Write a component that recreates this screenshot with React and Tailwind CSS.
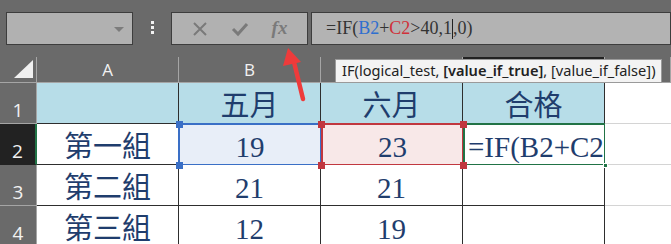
import React from "react";

const cellFont = { fontFamily: '"Liberation Serif", "Noto Sans CJK TC", serif' };

function Cell({ children, className = "" }) {
  return (
    <div
      className={`flex items-end justify-center pb-[2px] text-[29px] leading-none text-[#1f3d6d] border-r border-b border-[#2e2e2e] ${className}`}
      style={cellFont}
    >
      {children}
    </div>
  );
}

function RowHead({ n, active }) {
  return (
    <div
      className={`flex items-end justify-center pb-[3px] text-[19px] leading-none text-[#f2f2f2] border-b ${
        active ? "bg-[#222] border-[#222] border-r-2 border-r-[#217346]" : "bg-[#6a6a6a] border-[#a5a5a5] border-r border-r-[#a5a5a5]"
      }`}
      style={{ fontFamily: '"Open Sans", sans-serif' }}
    >
      {n}
    </div>
  );
}

function ColHead({ label, dark }) {
  return (
    <div
      className={`flex items-center justify-center text-[17px] text-[#f2f2f2] border-r border-[#a5a5a5] border-b ${
        dark ? "bg-[#222]" : "bg-[#6a6a6a]"
      }`}
      style={{ fontFamily: '"Open Sans", sans-serif' }}
    >
      {label}
    </div>
  );
}

function Handle({ x, y, color }) {
  return <div className={`absolute w-[7px] h-[7px] ${color}`} style={{ left: x - 3, top: y - 3 }} />;
}

export default function App() {
  return (
    <div className="relative w-[671px] h-[244px] overflow-hidden bg-[#6a6a6a] select-none">
      {/* toolbar */}
      <div className="h-[57px] flex items-start pt-[12px] pl-[6px]">
        <div className="relative w-[127px] h-[33px] bg-[#b1b1b1] border border-[#3d3d3d]">
          <div className="absolute right-[8px] top-[14px] w-0 h-0 border-l-[5px] border-r-[5px] border-t-[5px] border-l-transparent border-r-transparent border-t-[#7c7c7c]" />
        </div>
        <div className="w-[38px] flex flex-col items-center gap-[2px] pt-[9px]">
          <div className="w-[3px] h-[3px] bg-[#f2f2f2]" />
          <div className="w-[3px] h-[3px] bg-[#f2f2f2]" />
          <div className="w-[3px] h-[3px] bg-[#f2f2f2]" />
        </div>
        <div className="w-[137px] h-[33px] bg-[#b1b1b1] border border-[#3d3d3d] flex items-center justify-around px-[8px]">
          <svg width="16" height="16" viewBox="0 0 16 16">
            <path d="M2 2 L14 14 M14 2 L2 14" stroke="#7a7a7a" strokeWidth="2" />
          </svg>
          <svg width="18" height="16" viewBox="0 0 18 16">
            <path d="M2 8 L7 13 L16 3" stroke="#7a7a7a" strokeWidth="3" fill="none" />
          </svg>
          <span className="text-[19px] italic font-bold text-[#7a7a7a]" style={{ fontFamily: '"Liberation Serif", serif' }}>
            fx
          </span>
        </div>
        <div className="ml-[3px] flex-1 h-[33px] bg-[#b3b3b3] border border-[#3d3d3d] flex items-center pl-[14px] text-[18px] text-[#333]" style={{ fontFamily: '"Liberation Serif", serif' }}>
          <span>=IF(</span>
          <span className="text-[#2f6fcf]">B2</span>
          <span>+</span>
          <span className="text-[#d0303a]">C2</span>
          <span>&gt;40,1</span>
          <span className="inline-block w-[1px] h-[20px] bg-[#222]" />
          <span>,0)</span>
        </div>
      </div>

      {/* sheet */}
      <div className="grid grid-cols-[37px_142px_142px_142px_142px_66px] grid-rows-[26px_41px_41px_41px_41px]">
        <div className="relative border-r border-b border-[#a5a5a5] bg-[#6a6a6a]">
          <svg className="absolute right-[3px] bottom-[4px]" width="19" height="18" viewBox="0 0 19 18">
            <path d="M19 0 L19 18 L0 18 Z" fill="#f0f0f0" />
          </svg>
        </div>
        <ColHead label="A" />
        <ColHead label="B" />
        <ColHead label="" />
        <ColHead label="" dark />
        <ColHead label="" />

        <RowHead n="1" />
        <Cell className="bg-[#b7dde8]" />
        <Cell className="bg-[#b7dde8]">五月</Cell>
        <Cell className="bg-[#b7dde8]">六月</Cell>
        <Cell className="bg-[#b7dde8]">合格</Cell>
        <div className="bg-white border-b border-[#d4d4d4]" />

        <RowHead n="2" active />
        <Cell className="bg-white">第一組</Cell>
        <Cell className="bg-[#e8eef8] border-2 border-[#3a6fc6] -ml-[1px] -mt-[1px]">19</Cell>
        <Cell className="bg-[#f8e8e8] border-2 border-[#c1373f] -mt-[1px]">23</Cell>
        <Cell className="bg-white border-2 border-[#217346] -mt-[1px] justify-start pl-[3px] overflow-hidden whitespace-nowrap">=IF(B2+C2</Cell>
        <div className="bg-white border-b border-[#d4d4d4]" />

        <RowHead n="3" />
        <Cell className="bg-white">第二組</Cell>
        <Cell className="bg-white">21</Cell>
        <Cell className="bg-white">21</Cell>
        <Cell className="bg-white" />
        <div className="bg-white border-b border-[#d4d4d4]" />

        <RowHead n="4" />
        <Cell className="bg-white">第三組</Cell>
        <Cell className="bg-white">12</Cell>
        <Cell className="bg-white">19</Cell>
        <Cell className="bg-white" />
        <div className="bg-white border-b border-[#d4d4d4]" />
      </div>

      {/* selection handles */}
      <Handle x={179} y={124} color="bg-[#3a6fc6]" />
      <Handle x={179} y={165} color="bg-[#3a6fc6]" />
      <Handle x={321} y={124} color="bg-[#c1373f]" />
      <Handle x={321} y={165} color="bg-[#c1373f]" />
      <Handle x={463} y={124} color="bg-[#c1373f]" />
      <Handle x={463} y={165} color="bg-[#c1373f]" />
      <div className="absolute left-[603px] top-[163px] w-[5px] h-[5px] bg-[#217346] border border-white" />

      {/* function tooltip */}
      <div
        className="absolute left-[335px] top-[59px] w-[327px] h-[24px] bg-[#f3f3f3] border border-[#9a9a9a] flex items-center pl-[6px] text-[14.6px] text-[#222] whitespace-pre"
        style={{ fontFamily: '"Noto Sans", sans-serif' }}
      >
        IF(logical_test, <b className="font-semibold">[value_if_true]</b>, [value_if_false])
      </div>

      {/* red arrow */}
      <svg className="absolute left-[278px] top-[44px]" width="34" height="60" viewBox="0 0 34 60">
        <path d="M25 55 L16 18" stroke="#ee3b3b" strokeWidth="4.5" strokeLinecap="round" />
        <path d="M10 4 L5 22 L23 18 Z" fill="#ee3b3b" />
      </svg>
    </div>
  );
}
